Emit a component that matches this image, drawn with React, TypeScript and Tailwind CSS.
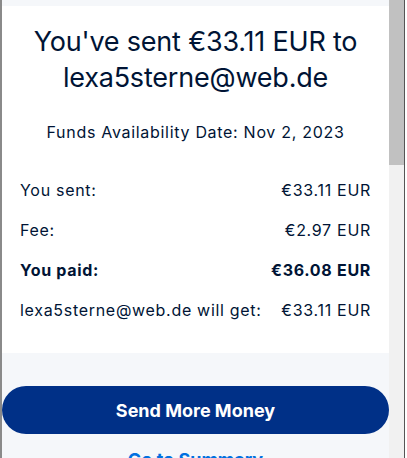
import React from "react";

const rows = [
  { label: "You sent:", value: "€33.11 EUR", bold: false },
  { label: "Fee:", value: "€2.97 EUR", bold: false },
  { label: "You paid:", value: "€36.08 EUR", bold: true },
  { label: "lexa5sterne@web.de will get:", value: "€33.11 EUR", bold: false },
];

export default function App() {
  return (
    <div
      className="flex h-[458px] w-[407px] overflow-hidden bg-white text-[#001435]"
      style={{ fontFamily: "Inter, 'Noto Sans', sans-serif" }}
    >
      <div className="w-[2px] shrink-0 bg-[#8a8a8a]" />
      <main className="flex w-[387px] shrink-0 flex-col bg-[#f5f7fa] pt-[6px]">
        <section className="flex h-[347px] shrink-0 flex-col bg-white px-[18px]">
          <h1 className="mt-[18px] text-center text-[27px] leading-[36px] tracking-[-0.2px]">
            You've sent €33.11 EUR to lexa5sterne@web.de
          </h1>
          <p className="mt-[24px] text-center text-[16px] leading-[24px] tracking-[0.7px]">
            Funds Availability Date: Nov 2, 2023
          </p>
          <div className="mt-[26px] flex flex-col">
            {rows.map((r) => (
              <div
                key={r.label}
                className={
                  "flex h-[40px] items-center justify-between text-[16px] tracking-[0.7px] " +
                  (r.bold ? "font-bold" : "")
                }
              >
                <span>{r.label}</span>
                <span>{r.value}</span>
              </div>
            ))}
          </div>
        </section>
        <div className="mt-[33px] flex shrink-0 flex-col items-center">
          <button className="h-[48px] w-full rounded-full bg-[#003087] text-[18px] font-bold text-white">
            Send More Money
          </button>
          <a className="mt-[12px] text-[18px] font-bold text-[#0070e0]">Go to Summary</a>
        </div>
      </main>
      <div className="flex w-[15px] shrink-0 flex-col bg-[#f1f1f1]">
        <div className="h-[165px] bg-[#c1c1c1]" />
      </div>
      <div className="w-[1px] shrink-0 bg-[#555]" />
      <div className="w-[2px] shrink-0 bg-white" />
    </div>
  );
}
